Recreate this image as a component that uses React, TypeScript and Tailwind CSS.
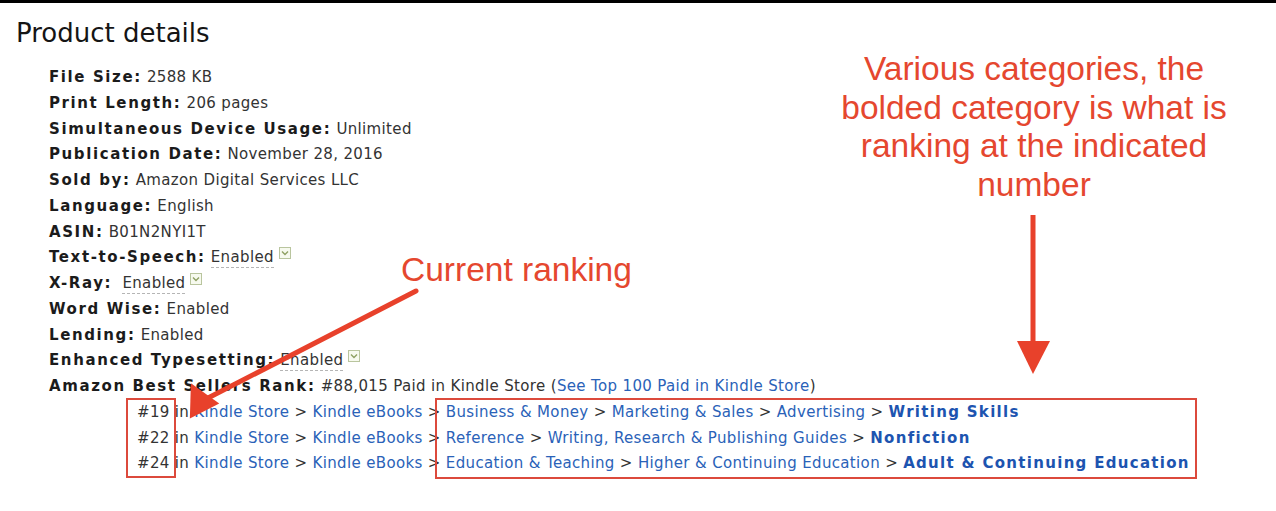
import type { ReactNode } from "react";

const detailFont = { fontFamily: '"DejaVu Sans", Verdana, sans-serif' };
const noteFont = { fontFamily: '"Liberation Sans", Arial, sans-serif' };

function Caret() {
  return (
    <span className="relative -top-[5px] ml-[5px] inline-flex h-[12px] w-[12px] items-center justify-center border border-[#b9c59e] bg-[#f7faef] align-middle">
      <svg width="8" height="6" viewBox="0 0 8 6">
        <path d="M1 1.5 L4 4.5 L7 1.5" fill="none" stroke="#8fa063" strokeWidth="1.4" />
      </svg>
    </span>
  );
}

function Dashed({ children }: { children: ReactNode }) {
  return <span className="border-b border-dashed border-[#b5b5b5] pb-[1px]">{children}</span>;
}

function Label({ children }: { children: ReactNode }) {
  return <b className="font-bold tracking-[1.6px] text-[#1b1b1b]">{children}</b>;
}

function Row({ label, children }: { label: string; children: ReactNode }) {
  return (
    <li>
      <Label>{label}</Label> <span className="text-[#333]">{children}</span>
    </li>
  );
}

const Sep = () => <span className="text-[#333]"> &gt; </span>;

function Rank({ n, path, last }: { n: string; path: string[]; last: string }) {
  return (
    <li className="pl-[88px]">
      <span className="text-[#333]">{n} in </span>
      <span className="text-[#2a62b8]">Kindle Store</span>
      <Sep />
      <span className="text-[#2a62b8]">Kindle eBooks</span>
      {path.map((p) => (
        <span key={p}>
          <Sep />
          <span className="text-[#2a62b8]">{p}</span>
        </span>
      ))}
      <Sep />
      <b className="font-bold tracking-[1.3px] text-[#1d54b0]">{last}</b>
    </li>
  );
}

export default function App() {
  return (
    <div className="relative h-[511px] w-[1276px] overflow-hidden border-t-[3px] border-black bg-white">
      <h2 className="pl-4 pt-[15px] text-[26px] leading-[30px] text-[#151515]" style={detailFont}>
        Product details
      </h2>

      <ul className="mt-[17px] pl-[49px] text-[15px] leading-[25.75px] tracking-[0.35px]" style={detailFont}>
        <Row label="File Size:">2588 KB</Row>
        <Row label="Print Length:">206 pages</Row>
        <Row label="Simultaneous Device Usage:">Unlimited</Row>
        <Row label="Publication Date:">November 28, 2016</Row>
        <Row label="Sold by:">Amazon Digital Services LLC</Row>
        <Row label="Language:">English</Row>
        <Row label="ASIN:">B01N2NYI1T</Row>
        <Row label="Text-to-Speech:">
          <Dashed>Enabled</Dashed>
          <Caret />
        </Row>
        <Row label="X-Ray:">
          {"\u00a0"}
          <Dashed>Enabled</Dashed>
          <Caret />
        </Row>
        <Row label="Word Wise:">Enabled</Row>
        <Row label="Lending:">Enabled</Row>
        <Row label="Enhanced Typesetting:">
          <Dashed>Enabled</Dashed>
          <Caret />
        </Row>
        <li>
          <Label>Amazon Best Sellers Rank:</Label>{" "}
          <span className="text-[#333]">#88,015 Paid in Kindle Store (</span>
          <span className="text-[#2a62b8]">See Top 100 Paid in Kindle Store</span>
          <span className="text-[#333]">)</span>
        </li>
        <Rank n="#19" path={["Business & Money", "Marketing & Sales", "Advertising"]} last="Writing Skills" />
        <Rank n="#22" path={["Reference", "Writing, Research & Publishing Guides"]} last="Nonfiction" />
        <Rank n="#24" path={["Education & Teaching", "Higher & Continuing Education"]} last="Adult & Continuing Education" />
      </ul>

      {/* annotation boxes */}
      <div className="absolute left-[126px] top-[395px] h-[80px] w-[50px] border-2 border-[#dc4a3c]" />
      <div className="absolute left-[435px] top-[395px] h-[81px] w-[762px] border-2 border-[#dc4a3c]" />

      {/* annotation texts */}
      <div className="absolute left-[401px] top-[247px] text-[33.5px] leading-[40px] text-[#e5472f]" style={noteFont}>
        Current ranking
      </div>
      <div className="absolute left-[834px] top-[47px] w-[400px] text-center text-[33.5px] leading-[38.5px] text-[#e5472f]" style={noteFont}>
        Various categories, the
        <br />
        bolded category is what is
        <br />
        ranking at the indicated
        <br />
        number
      </div>

      {/* arrows */}
      <svg className="pointer-events-none absolute left-0 top-0" width="1276" height="511" viewBox="0 0 1276 511">
        <line x1="416" y1="288" x2="208" y2="395" stroke="#e8412b" strokeWidth="5" strokeLinecap="round" />
        <polygon points="183,409 200,378 216,409" fill="#e8412b" transform="rotate(-27 200 398)" />
        <line x1="1033" y1="212" x2="1033" y2="345" stroke="#e8412b" strokeWidth="5" />
        <polygon points="1017,338 1050,338 1033,371" fill="#e8412b" />
      </svg>
    </div>
  );
}
